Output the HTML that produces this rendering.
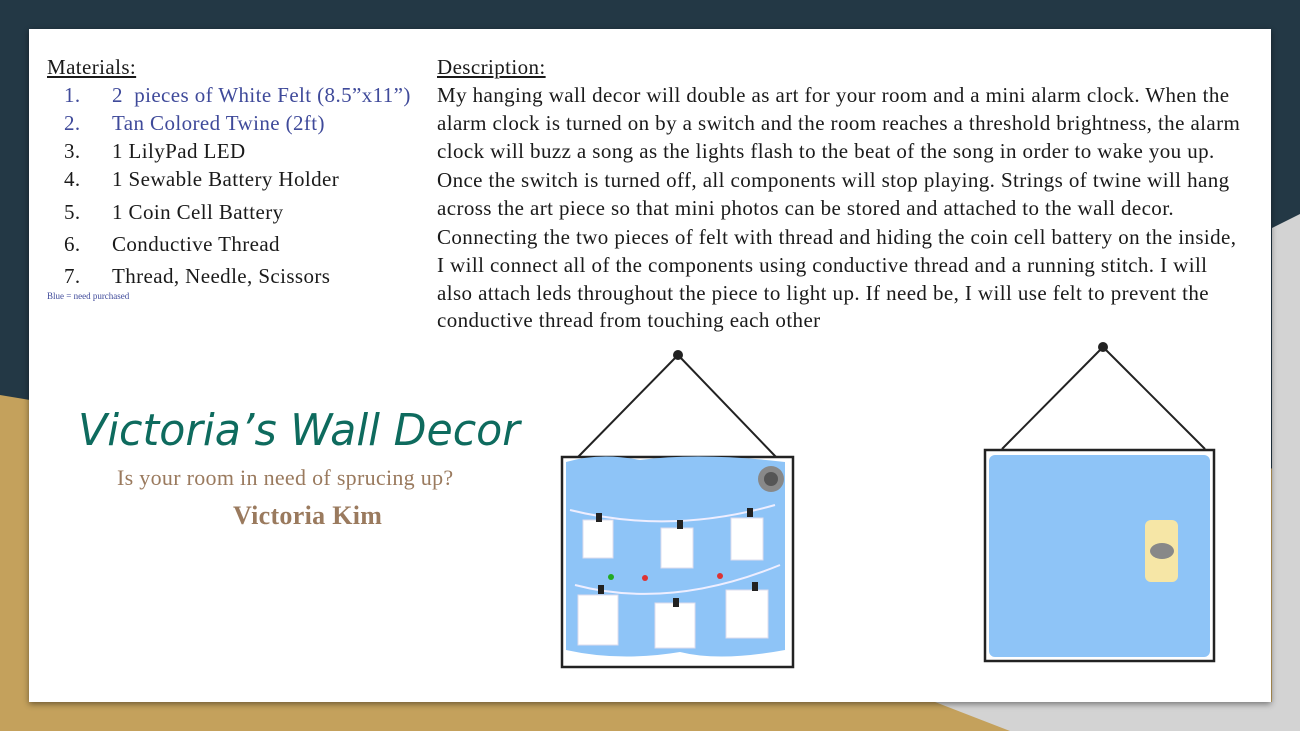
<!DOCTYPE html>
<html><head><meta charset="utf-8"><style>
html,body{margin:0;padding:0;width:1300px;height:731px;overflow:hidden;position:relative;background:#233845;font-family:"Liberation Serif",serif}
.card{position:absolute;left:29px;top:29px;width:1242px;height:673px;background:#fff;box-shadow:0 2px 6px rgba(0,0,0,.45)}
.t{position:absolute;white-space:nowrap;font-size:21px;color:#1a1a1a;letter-spacing:0.4px}
.u{text-decoration:underline}
.b{color:#3f4a9a}
</style></head><body>
<svg width="1300" height="731" style="position:absolute;left:0;top:0">
<polygon points="0,395 60,405 1300,470 1300,731 0,731" fill="#c4a15c"/>
<polygon points="1272,228 1300,214 1300,731 1010,731 935,702 1272,702" fill="#d3d3d3"/>
</svg>
<div class="card"></div>
<div class="t u" style="left:47px;top:55px">Materials:</div>
<div class="t b" style="left:64px;top:83px">1.</div><div class="t b" style="left:112px;top:83px">2&nbsp; pieces of White Felt (8.5”x11”)</div>
<div class="t b" style="left:64px;top:111px">2.</div><div class="t b" style="left:112px;top:111px">Tan Colored Twine (2ft)</div>
<div class="t" style="left:64px;top:139px">3.</div><div class="t" style="left:112px;top:139px">1 LilyPad LED</div>
<div class="t" style="left:64px;top:167px">4.</div><div class="t" style="left:112px;top:167px">1 Sewable Battery Holder</div>
<div class="t" style="left:64px;top:200px">5.</div><div class="t" style="left:112px;top:200px">1 Coin Cell Battery</div>
<div class="t" style="left:64px;top:232px">6.</div><div class="t" style="left:112px;top:232px">Conductive Thread</div>
<div class="t" style="left:64px;top:264px">7.</div><div class="t" style="left:112px;top:264px">Thread, Needle, Scissors</div>
<div class="t b" style="left:47px;top:291px;font-size:9px;letter-spacing:0">Blue = need purchased</div>
<div class="t u" style="left:437px;top:55px">Description:</div>
<div class="t" style="left:437px;top:83px">My hanging wall decor will double as art for your room and a mini alarm clock. When the</div>
<div class="t" style="left:437px;top:111px">alarm clock is turned on by a switch and the room reaches a threshold brightness, the alarm</div>
<div class="t" style="left:437px;top:139px">clock will buzz a song as the lights flash to the beat of the song in order to wake you up.</div>
<div class="t" style="left:437px;top:168px">Once the switch is turned off, all components will stop playing. Strings of twine will hang</div>
<div class="t" style="left:437px;top:196px">across the art piece so that mini photos can be stored and attached to the wall decor.</div>
<div class="t" style="left:437px;top:225px">Connecting the two pieces of felt with thread and hiding the coin cell battery on the inside,</div>
<div class="t" style="left:437px;top:253px">I will connect all of the components using conductive thread and a running stitch. I will</div>
<div class="t" style="left:437px;top:281px">also attach leds throughout the piece to light up. If need be, I will use felt to prevent the</div>
<div class="t" style="left:437px;top:308px">conductive thread from touching each other</div>
<div class="t" style="left:78px;top:405px;font-family:'DejaVu Sans',sans-serif;font-style:italic;font-size:44px;color:#0e6b5e;letter-spacing:0;transform:scaleX(0.97);transform-origin:left">Victoria’s Wall Decor</div>
<div class="t" style="left:117px;top:465px;color:#9a7a5e;font-size:22px;letter-spacing:0.3px">Is your room in need of sprucing up?</div>
<div class="t" style="left:233px;top:501px;color:#9a7a5e;font-size:26px;font-weight:bold;letter-spacing:0.3px">Victoria Kim</div>
<svg width="1300" height="731" style="position:absolute;left:0;top:0">
<line x1="678" y1="355" x2="578" y2="457" stroke="#222" stroke-width="2"/>
<line x1="678" y1="355" x2="776" y2="457" stroke="#222" stroke-width="2"/>
<circle cx="678" cy="355" r="5" fill="#222"/>
<rect x="562" y="457" width="231" height="210" fill="#fff" stroke="#222" stroke-width="2.5"/>
<path d="M566,462 Q600,452 640,460 Q700,452 785,462 L785,650 Q720,662 680,652 Q620,662 566,650 Z" fill="#8ec4f7"/>
<circle cx="771" cy="479" r="13" fill="#888"/><circle cx="771" cy="479" r="7" fill="#555"/>
<path d="M570,510 Q670,535 775,505" stroke="#eef" stroke-width="2" fill="none"/>
<path d="M575,585 Q670,610 780,565" stroke="#eef" stroke-width="2" fill="none"/>
<g fill="#fff" stroke="#dde" stroke-width="1"><rect x="583" y="520" width="30" height="38"/><rect x="661" y="528" width="32" height="40"/><rect x="731" y="518" width="32" height="42"/><rect x="578" y="595" width="40" height="50"/><rect x="655" y="603" width="40" height="45"/><rect x="726" y="590" width="42" height="48"/></g>
<g fill="#222"><rect x="596" y="513" width="6" height="9"/><rect x="677" y="520" width="6" height="9"/><rect x="747" y="508" width="6" height="9"/><rect x="598" y="585" width="6" height="9"/><rect x="673" y="598" width="6" height="9"/><rect x="752" y="582" width="6" height="9"/></g>
<circle cx="611" cy="577" r="3" fill="#2a2"/><circle cx="645" cy="578" r="3" fill="#d33"/><circle cx="720" cy="576" r="3" fill="#d33"/>
<line x1="1103" y1="347" x2="1002" y2="449" stroke="#222" stroke-width="2"/>
<line x1="1103" y1="347" x2="1205" y2="449" stroke="#222" stroke-width="2"/>
<circle cx="1103" cy="347" r="5" fill="#222"/>
<rect x="985" y="450" width="229" height="211" fill="#fff" stroke="#222" stroke-width="2.5"/>
<rect x="989" y="455" width="221" height="202" fill="#8ec4f7" rx="6"/>
<rect x="1145" y="520" width="33" height="62" rx="6" fill="#f6e6a6"/>
<ellipse cx="1162" cy="551" rx="12" ry="8" fill="#888"/>
</svg>
</body></html>
